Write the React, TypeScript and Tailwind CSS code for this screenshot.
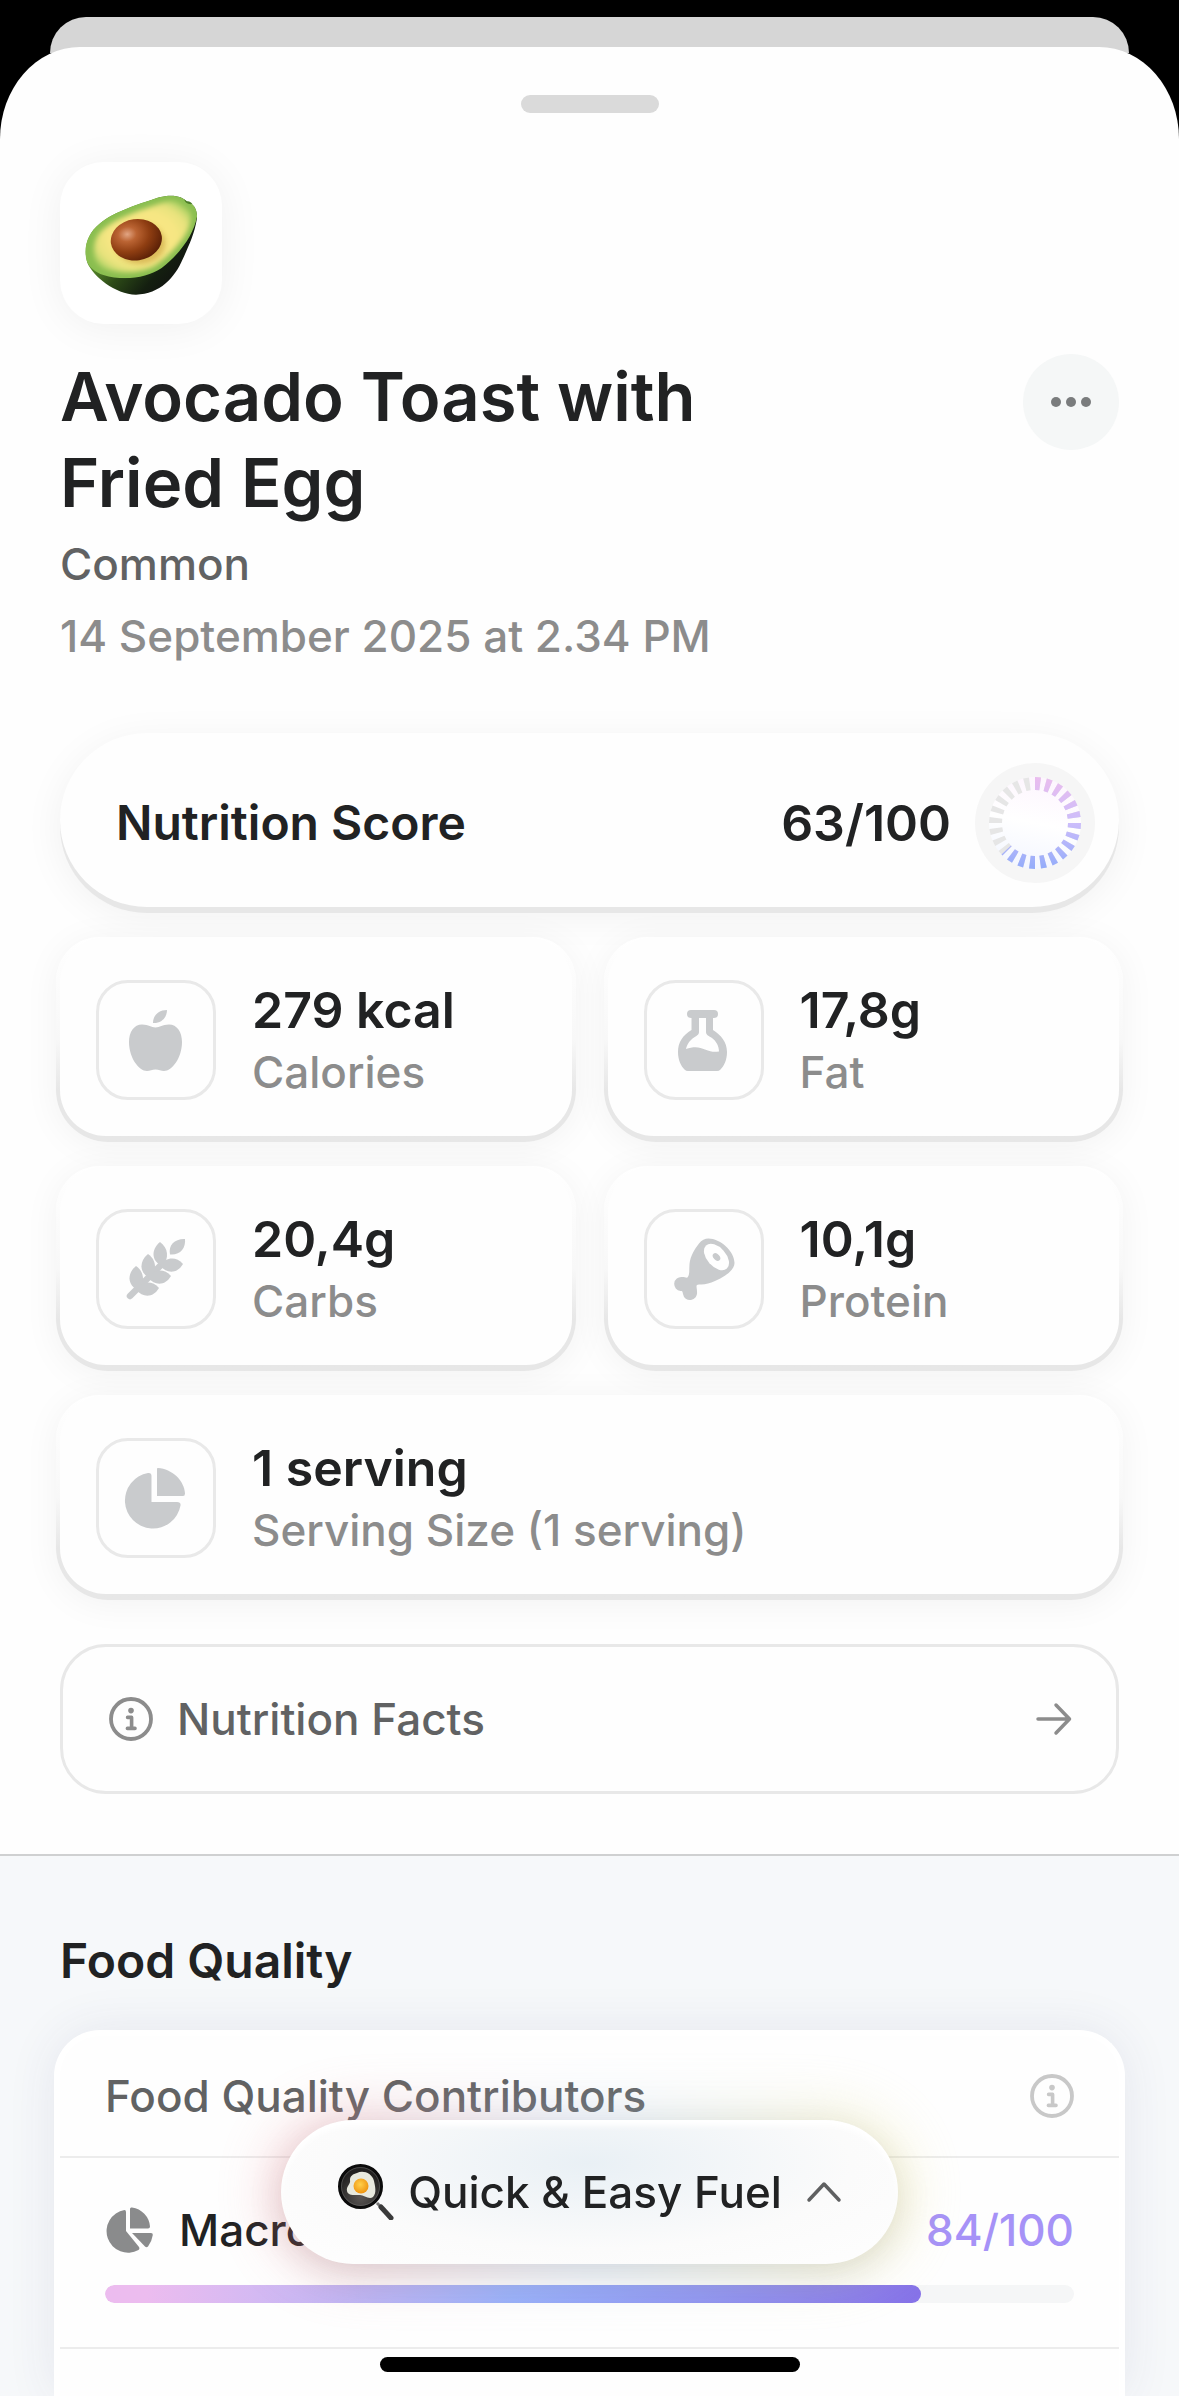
import type { ReactNode } from "react";

function InfoIcon({ className }: { className: string }) {
  return (
    <svg viewBox="0 0 44 44" fill="none" stroke="currentColor" strokeLinecap="round" strokeLinejoin="round" className={className} aria-hidden="true">
      <circle cx="22" cy="22" r="20" strokeWidth="3.8" />
      <circle cx="22" cy="13.6" r="2.8" fill="currentColor" stroke="none" />
      <path d="M18.6 20.4H22.6V31M18.4 31.4H26" strokeWidth="3.6" />
    </svg>
  );
}

function Avocado() {
  return (
    <svg viewBox="0 6 486 486" className="size-full" aria-hidden="true">
      <defs>
        <linearGradient id="skin" x1="0.2" y1="0.5" x2="0.8" y2="0.95">
          <stop offset="0" stopColor="#5c8f2c" />
          <stop offset="0.35" stopColor="#2c4a17" />
          <stop offset="0.7" stopColor="#141f10" />
          <stop offset="1" stopColor="#111" />
        </linearGradient>
        <radialGradient id="flesh" cx="0.5" cy="0.5" r="0.62">
          <stop offset="0.55" stopColor="#f7e683" />
          <stop offset="0.78" stopColor="#e6e27c" />
          <stop offset="0.92" stopColor="#b9d669" />
          <stop offset="1" stopColor="#8abd4f" />
        </radialGradient>
        <radialGradient id="seed" cx="0.34" cy="0.34" r="0.72">
          <stop offset="0" stopColor="#e2a583" />
          <stop offset="0.25" stopColor="#bb6433" />
          <stop offset="0.6" stopColor="#8f3e12" />
          <stop offset="1" stopColor="#5a2006" />
        </radialGradient>
        <filter id="soft" x="-20%" y="-20%" width="140%" height="140%">
          <feGaussianBlur stdDeviation="8" />
        </filter>
        <clipPath id="face">
          <path d="M118 192C160 155 250 128 298 112C335 102 368 108 380 126C400 128 412 148 411 170C402 222 360 282 305 324C262 354 190 364 130 345C105 336 88 322 80 302C68 262 85 218 118 192Z" />
        </clipPath>
      </defs>
      <path d="M118 192C160 155 250 128 298 112C335 102 368 108 380 126C400 128 412 148 411 175C403 225 385 260 368 298C345 352 300 403 228 404C165 402 100 350 82 308C68 262 85 218 118 192Z" fill="url(#skin)" />
      <g clipPath="url(#face)">
        <rect x="70" y="90" width="350" height="290" fill="#8abe50" />
        <path d="M130 208C175 168 260 146 305 128C345 116 368 126 384 144C400 160 392 192 382 214C357 259 320 292 287 316C250 339 185 344 133 328C96 312 88 242 130 208Z" fill="url(#flesh)" filter="url(#soft)" />
      </g>
      <path d="M372 118C376 130 386 134 397 132C392 126 388 123 381 124Z" fill="#4d7d2a" />
      <ellipse cx="240" cy="250" rx="76" ry="62" fill="#b98a2c" opacity="0.45" filter="url(#soft)" />
      <ellipse cx="229" cy="239" rx="77" ry="62" fill="url(#seed)" transform="rotate(-8 229 239)" />
    </svg>
  );
}

function FryingPan() {
  return (
    <svg viewBox="0 0 56 56" className="size-14 shrink-0" aria-hidden="true">
      <defs>
        <radialGradient id="pan" cx="0.5" cy="0.75" r="0.6">
          <stop offset="0" stopColor="#5a5654" />
          <stop offset="1" stopColor="#222120" />
        </radialGradient>
        <radialGradient id="yolk" cx="0.45" cy="0.4" r="0.6">
          <stop offset="0" stopColor="#ffd04a" />
          <stop offset="1" stopColor="#ef9410" />
        </radialGradient>
      </defs>
      <path d="M39 39L44 44" stroke="#777" strokeWidth="3" />
      <path d="M43 43L53 54" stroke="#3a3a3a" strokeWidth="5" strokeLinecap="round" />
      <circle cx="22.5" cy="22.5" r="21" fill="url(#pan)" stroke="#0b0b0b" strokeWidth="3" />
      <circle cx="22.5" cy="22.5" r="19" fill="none" stroke="#777" strokeWidth="0.8" opacity="0.6" />
      <path d="M19 9C25 6 34 9 36 17C37 22 39 29 35 33C31 36 26 31 22 31C17 31 10 32 9 27C8 22 13 20 12 16C12 12 15 10 19 9Z" fill="#e8e9de" />
      <circle cx="23" cy="22" r="7.5" fill="url(#yolk)" />
    </svg>
  );
}

function Gauge({ percent }: { percent: number }) {
  const ticks = Array.from({ length: 24 }, (_, i) => i);
  const point = (deg: number, r: number) => {
    const a = (deg * Math.PI) / 180;
    return `${(60 + r * Math.sin(a)).toFixed(2)} ${(60 - r * Math.cos(a)).toFixed(2)}`;
  };
  const wedge = (from: number, to: number) =>
    `M${point(from, 46)}L${point(to, 46)}L${point(to, 33)}L${point(from, 33)}Z`;
  const end = percent * 3.6;
  return (
    <svg viewBox="0 0 120 120" className="size-[120px] shrink-0" aria-hidden="true">
      <defs>
        <linearGradient id="tick" x1="0" y1="14" x2="0" y2="106" gradientUnits="userSpaceOnUse">
          <stop offset="0" stopColor="#eabdee" />
          <stop offset="0.5" stopColor="#ccbdfb" />
          <stop offset="1" stopColor="#93acfa" />
        </linearGradient>
        <linearGradient id="core" x1="0.6" y1="0" x2="0.4" y2="1">
          <stop offset="0" stopColor="#fdf5fe" />
          <stop offset="0.5" stopColor="#fff" />
          <stop offset="1" stopColor="#f3f6ff" />
        </linearGradient>
      </defs>
      <circle cx="60" cy="60" r="60" fill="#f6f6f6" />
      <circle cx="60" cy="60" r="46" fill="url(#core)" />
      {ticks.map((i) => {
        const from = i * 15;
        const to = from + 7.5;
        const filledTo = Math.min(to, end);
        return (
          <g key={i}>
            <path d={wedge(from, to)} fill="#e6e6e6" />
            {filledTo > from && <path d={wedge(from, filledTo)} fill="url(#tick)" />}
          </g>
        );
      })}
    </svg>
  );
}

const appleIcon = (
  <>
    <path d="M59.5 47.5C64 47.5 66 44.5 73 44.5C81 44.5 86 52 86 62C86 78 76 91 68 91C65 91 63 89.5 59.5 89.5C56 89.5 54 91 51 91C43 91 33 78 33 62C33 52 38 44.5 46 44.5C53 44.5 55 47.5 59.5 47.5Z" />
    <path d="M57 43C57 36 62 30 71 30C71 38 65 43.5 57 43Z" />
  </>
);

const flaskIcon = (
  <path
    fillRule="evenodd"
    d="M48 30H70A4 4 0 0 1 70 38H69V50C77 55 83 62 83 72C83 80 80 86 76.5 89.5Q75 91 73 91H44Q42 91 40.5 89.5C37 86 34 80 34 72C34 62 39 55 47.5 50V38H47A4 4 0 0 1 47 30ZM55 38V52C55 55 52 56 50 57.5C45 61 43 65 42 69C50 66 56 67 61 69.5C67 72 70 72 75 71.5C75 66 72 61 68 58C65 56 62 55 62 52V38Z"
  />
);

const wheatIcon = (
  <>
    <path d="M34 87L66 55" stroke="currentColor" strokeWidth="6.5" strokeLinecap="round" />
    <path d="M74 45.5C72 36 79 29.5 89 30C90 39 84 46.5 74 45.5Z" />
    {[0, 12, 24].map((d) => (
      <g key={d} transform={`translate(${-d} ${d})`}>
        <path d="M64 33C72.5 39 73 49 67 57C56 54 54 41 64 33Z" />
        <path d="M64 56.5C70 48 80 47 87 55C81 65 71 65 64 56.5Z" />
      </g>
    ))}
  </>
);

const drumstickIcon = (
  <>
    <path d="M64.5 29.5C76 29.500 90.500 42 90.500 54C90.500 60 83 67 71 72C66 74 62 75.500 57 75.500C54 75.500 52.500 75.500 52.500 77C52.500 79 53 80 53 83A7 7 0 0 1 39 85C38.500 82.500 38.500 82 36.500 82A7 7 0 1 1 38 68C41 68 42 69 43.500 68.500C46 66 45 60 45.500 55C46.500 47 50 41 55 34.500C57.500 31 61 29.500 64.500 29.500Z" />
    <ellipse cx="72.5" cy="48" rx="15.5" ry="9.5" fill="#fff" transform="rotate(48 72.5 48)" />
    <ellipse cx="72.5" cy="48" rx="4.5" ry="3" transform="rotate(48 72.5 48)" />
  </>
);

const pieIcon = (
  <>
    <path d="M52 35Q55.5 34.5 55.5 38V64H81Q85 64 84.5 67.5A28 28 0 1 1 52 35Z" />
    <path d="M61 30.5Q61 30 62 30C76 31 88 42 89 55.5Q89 58 87 58H61Z" />
  </>
);

function StatCard({ icon, value, label, wide }: { icon: ReactNode; value: string; label: string; wide?: boolean }) {
  return (
    <div className={wide ? "col-span-2" : ""}>
      <div className="-mx-1 rounded-t-[44px] rounded-b-[52px] bg-linear-to-b from-white via-[#f8f8f8] to-[#e7e7e7] to-75% px-1 pb-[6px] shadow-[0_4px_36px_rgba(0,0,0,0.05)]">
        <div className="relative z-10 flex items-center gap-9 rounded-[46px] bg-[#fefefe] px-9 pt-[43px] pb-9">
          <div className="shrink-0 rounded-[32px] border-[3px] border-[#e9e9e9] text-[#c9cbcd]">
            <svg viewBox="3 3 114 114" fill="currentColor" className="size-[114px]" aria-hidden="true">
              {icon}
            </svg>
          </div>
          <div className="flex flex-col gap-1">
            <span className="text-[50px] leading-[60px] font-semibold text-[#212223]">{value}</span>
            <span className="text-[44px] leading-[56px] font-medium text-[#8c8c8c]">{label}</span>
          </div>
        </div>
      </div>
    </div>
  );
}

export default function App() {
  return (
    <div className="flex min-h-screen flex-col bg-black pt-[17px] font-['Inter',sans-serif]">
      <div className="mx-[50px] h-9 rounded-t-[44px] bg-[#d6d6d6]" />
      <div className="relative -mt-1.5 flex grow flex-col overflow-hidden rounded-t-[80px_92px] bg-[#fefefe]">
        <header className="flex flex-col px-[60px] pt-12">
          <div className="h-[18px] w-[138px] self-center rounded-full bg-[#dadada]" />
          <div className="mt-[49px] size-[162px] rounded-[44px] bg-white shadow-[0_4px_44px_rgba(0,0,0,0.06)]">
            <Avocado />
          </div>
          <div className="mt-[30px] flex items-start justify-between">
            <h1 className="w-[720px] text-[67px] leading-[86px] font-semibold text-[#212223]">Avocado Toast with Fried Egg</h1>
            <button type="button" aria-label="More options" className="flex size-24 items-center justify-center rounded-full bg-[#f5f7f7]">
              <svg viewBox="0 0 40 10" className="h-2.5 w-10" fill="#7a7c7d" aria-hidden="true">
                <circle cx="5" cy="5" r="5" />
                <circle cx="20" cy="5" r="5" />
                <circle cx="35" cy="5" r="5" />
              </svg>
            </button>
          </div>
          <p className="mt-2.5 text-[44px] leading-[56px] font-medium text-[#616263]">Common</p>
          <p className="mt-4 text-[44px] leading-[56px] font-medium text-[#8c8c8c]">14 September 2025 at 2.34 PM</p>
        </header>

        <main className="flex grow flex-col">
          <section className="flex flex-col px-[60px] pt-[69px]">
            <div className="flex items-center rounded-full bg-[#fefefe] pt-[30px] pr-6 pb-6 pl-14 shadow-[0_6px_0_#e7e7e7,0_8px_40px_rgba(0,0,0,0.06)]">
              <h2 className="grow text-[48px] leading-[60px] font-semibold text-[#212223]">Nutrition Score</h2>
              <span className="mr-6 text-[50px] leading-[60px] font-semibold text-[#212223]">63/100</span>
              <Gauge percent={63} />
            </div>
            <div className="mt-[30px] grid grid-cols-2 gap-x-9 gap-y-6">
              <StatCard icon={appleIcon} value="279 kcal" label="Calories" />
              <StatCard icon={flaskIcon} value="17,8g" label="Fat" />
              <StatCard icon={wheatIcon} value="20,4g" label="Carbs" />
              <StatCard icon={drumstickIcon} value="10,1g" label="Protein" />
              <StatCard icon={pieIcon} value="1 serving" label="Serving Size (1 serving)" wide />
            </div>
            <button type="button" className="relative z-10 mt-11 flex items-center gap-6 rounded-[46px] border-[3px] border-[#e8e8e8] bg-[#fefefe] py-11 pr-11 pl-[46px] text-left">
              <InfoIcon className="size-11 shrink-0 text-[#8c8c8c]" />
              <span className="grow text-[44px] leading-[56px] font-medium text-[#616263]">Nutrition Facts</span>
              <svg viewBox="0 0 36 36" className="size-9 text-[#8c8c8c]" fill="none" stroke="currentColor" strokeWidth="3.5" strokeLinecap="round" strokeLinejoin="round" aria-hidden="true">
                <path d="M2 18H33M20 4L33.5 18L20 32" />
              </svg>
            </button>
          </section>

          <section className="mt-[60px] flex grow flex-col border-t-2 border-[#cfd0d1] bg-[#f6f8fa] pt-[75px]">
            <h2 className="px-[60px] text-[48px] leading-[60px] font-semibold text-[#212223]">Food Quality</h2>
            <div className="mx-[54px] mt-[39px] grow rounded-t-[46px] border-x-[6px] border-t-[6px] border-white bg-[#fefefe] shadow-[0_0_50px_rgba(60,60,110,0.09)]">
              <div className="flex items-center justify-between border-b-2 border-[#ececec] px-[45px] py-8">
                <h3 className="text-[44px] leading-[56px] font-medium text-[#616263]">Food Quality Contributors</h3>
                <button type="button" aria-label="About food quality contributors" className="text-[#c8c8c8]">
                  <InfoIcon className="size-11" />
                </button>
              </div>
              <div className="border-b-2 border-[#ececec] px-[45px] py-11">
                <div className="flex items-center">
                  <svg viewBox="0 0 48 46" className="h-[46px] w-12 shrink-0 text-[#8a8b8c]" fill="currentColor" aria-hidden="true">
                    <path d="M19.5 3Q21 3 21 5V24L34 40Q35 42 33.5 43A21.5 21.5 0 1 1 19.5 3Z" />
                    <path d="M25 2Q25 0 27 0.5A21 21 0 0 1 45 19.5Q45 21.5 43 21.5H25Z" />
                    <path d="M27 26H46Q48 26 47.8 28Q47 34 43 39.5Q41.5 41 40 39.5Z" />
                  </svg>
                  <span className="ml-[26px] grow text-[44px] leading-[56px] font-medium text-[#212223]">Macronutrients</span>
                  <span className="text-[44px] leading-[56px] font-medium text-[#a692f7]">84/100</span>
                </div>
                <div className="mt-[27px] h-[18px] overflow-hidden rounded-full bg-[#f5f6f7]">
                  <div className="h-full rounded-full bg-linear-to-r from-[#ecbcef] from-5% via-[#98b0fa] via-50% to-[#8672e8]" style={{ width: "84.2%" }} />
                </div>
              </div>
            </div>
          </section>
        </main>
      </div>

      <div className="pointer-events-none fixed inset-x-0 bottom-6 z-20 flex flex-col items-center gap-[93px]">
        <div className="pointer-events-auto relative">
          <div className="absolute -inset-1 rounded-full bg-linear-to-r from-[#ef8088] via-[#a9c4e4] to-[#ecdf7a] opacity-45 blur-[30px]" />
          <button
            type="button"
            className="relative flex h-36 items-center rounded-full bg-white bg-[radial-gradient(ellipse_at_50%_30%,#e9f0f5_0%,#fbfbfb_60%,#fefefe_100%)] pr-14 pl-[57px] shadow-[inset_0_6px_6px_#fff,0_10px_36px_rgba(0,0,0,0.1)]"
          >
            <FryingPan />
            <span className="ml-3.5 text-[44px] leading-[56px] font-medium whitespace-nowrap text-[#212223]">Quick &amp; Easy Fuel</span>
            <svg viewBox="0 0 36 24" className="ml-6 h-6 w-9 shrink-0" fill="none" stroke="#5f6061" strokeWidth="3.5" strokeLinecap="round" strokeLinejoin="round" aria-hidden="true">
              <path d="M3 20L18 4L33 20" />
            </svg>
          </button>
        </div>
        <div className="h-[15px] w-[420px] rounded-full bg-black" />
      </div>
    </div>
  );
}
